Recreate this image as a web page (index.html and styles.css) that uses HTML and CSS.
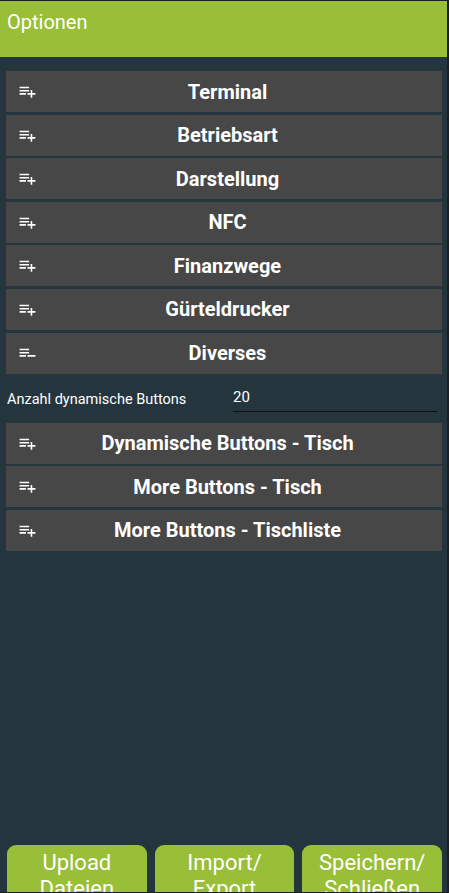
FILE: index.html
```html
<!DOCTYPE html>
<html lang="de">
<head>
  <meta charset="UTF-8" />
  <title>Optionen</title>
  <link rel="stylesheet" href="styles.css">
</head>
<body>
  <div class="screen">
    <div class="toolbar">Optionen</div>

    <div class="content">
      <div class="section">
        <svg class="icon" viewBox="0 0 24 24"><path d="M14 10H2v2h12v-2zm0-4H2v2h12V6zm4 8v-4h-2v4h-4v2h4v4h2v-4h4v-2h-4zM2 16h8v-2H2v2z"/></svg>
        <span>Terminal</span>
      </div>
      <div class="section">
        <svg class="icon" viewBox="0 0 24 24"><path d="M14 10H2v2h12v-2zm0-4H2v2h12V6zm4 8v-4h-2v4h-4v2h4v4h2v-4h4v-2h-4zM2 16h8v-2H2v2z"/></svg>
        <span>Betriebsart</span>
      </div>
      <div class="section">
        <svg class="icon" viewBox="0 0 24 24"><path d="M14 10H2v2h12v-2zm0-4H2v2h12V6zm4 8v-4h-2v4h-4v2h4v4h2v-4h4v-2h-4zM2 16h8v-2H2v2z"/></svg>
        <span>Darstellung</span>
      </div>
      <div class="section">
        <svg class="icon" viewBox="0 0 24 24"><path d="M14 10H2v2h12v-2zm0-4H2v2h12V6zm4 8v-4h-2v4h-4v2h4v4h2v-4h4v-2h-4zM2 16h8v-2H2v2z"/></svg>
        <span>NFC</span>
      </div>
      <div class="section">
        <svg class="icon" viewBox="0 0 24 24"><path d="M14 10H2v2h12v-2zm0-4H2v2h12V6zm4 8v-4h-2v4h-4v2h4v4h2v-4h4v-2h-4zM2 16h8v-2H2v2z"/></svg>
        <span>Finanzwege</span>
      </div>
      <div class="section">
        <svg class="icon" viewBox="0 0 24 24"><path d="M14 10H2v2h12v-2zm0-4H2v2h12V6zm4 8v-4h-2v4h-4v2h4v4h2v-4h4v-2h-4zM2 16h8v-2H2v2z"/></svg>
        <span>Gürteldrucker</span>
      </div>
      <div class="section">
        <svg class="icon" viewBox="0 0 24 24"><path d="M2 16h8v-2H2v2zm10-2v2h10v-2H12zm2-8H2v2h12V6zm0 4H2v2h12v-2z"/></svg>
        <span>Diverses</span>
      </div>

      <div class="field">
        <label for="dyn-count">Anzahl dynamische Buttons</label>
        <input id="dyn-count" type="text" value="20" />
      </div>

      <div class="section">
        <svg class="icon" viewBox="0 0 24 24"><path d="M14 10H2v2h12v-2zm0-4H2v2h12V6zm4 8v-4h-2v4h-4v2h4v4h2v-4h4v-2h-4zM2 16h8v-2H2v2z"/></svg>
        <span>Dynamische Buttons - Tisch</span>
      </div>
      <div class="section">
        <svg class="icon" viewBox="0 0 24 24"><path d="M14 10H2v2h12v-2zm0-4H2v2h12V6zm4 8v-4h-2v4h-4v2h4v4h2v-4h4v-2h-4zM2 16h8v-2H2v2z"/></svg>
        <span>More Buttons - Tisch</span>
      </div>
      <div class="section">
        <svg class="icon" viewBox="0 0 24 24"><path d="M14 10H2v2h12v-2zm0-4H2v2h12V6zm4 8v-4h-2v4h-4v2h4v4h2v-4h4v-2h-4zM2 16h8v-2H2v2z"/></svg>
        <span>More Buttons - Tischliste</span>
      </div>
    </div>

    <div class="actions">
      <button class="action">Upload<br>Dateien</button>
      <button class="action">Import/<br>Export</button>
      <button class="action">Speichern/<br>Schließen</button>
    </div>
  </div>
</body>
</html>
```

FILE: styles.css
```css
body {
  margin: 0;
  background: #1c1f21;
  font-family: Roboto, "Liberation Sans", sans-serif;
  color: #fff;
}
.screen {
  margin-top: 1px;
  width: 447px;
  height: 891px;
  background: #25353e;
  display: flex;
  flex-direction: column;
  overflow: hidden;
}
.toolbar {
  height: 56px;
  flex-shrink: 0;
  background: #99be38;
  box-sizing: border-box;
  padding: 9px 0 0 7px;
  font-size: 20px;
}
.content {
  flex: 1;
  padding: 14px 5px 0 6px;
}
.section {
  position: relative;
  height: 41px;
  margin-bottom: 2.6px;
  padding-left: 7px;
  background: #474747;
  display: flex;
  align-items: center;
  justify-content: center;
  font-size: 20px;
  font-weight: bold;
}
.icon {
  position: absolute;
  left: 12px;
  top: 11px;
  width: 19px;
  height: 19px;
  fill: #fff;
}
.field {
  display: flex;
  align-items: center;
  height: 47px;
  margin-top: -0.6px;
}
.field label {
  width: 226px;
  padding-left: 1px;
  font-size: 14.5px;
}
.field input {
  width: 204px;
  box-sizing: border-box;
  margin-top: 2px;
  padding: 0 0 5px 0;
  background: transparent;
  border: none;
  border-bottom: 1px solid #111;
  color: #fff;
  font-family: inherit;
  font-size: 15px;
  outline: none;
}
.actions {
  display: flex;
  gap: 8px;
  padding: 0 5px 0 7px;
  height: 47px;
  flex-shrink: 0;
}
.action {
  flex: 1;
  height: 60px;
  border: none;
  border-radius: 9px;
  background: #99be38;
  color: #fff;
  font-family: inherit;
  font-size: 22px;
  line-height: 26px;
  padding: 1px 0 0 0;
  display: block;
}
```
